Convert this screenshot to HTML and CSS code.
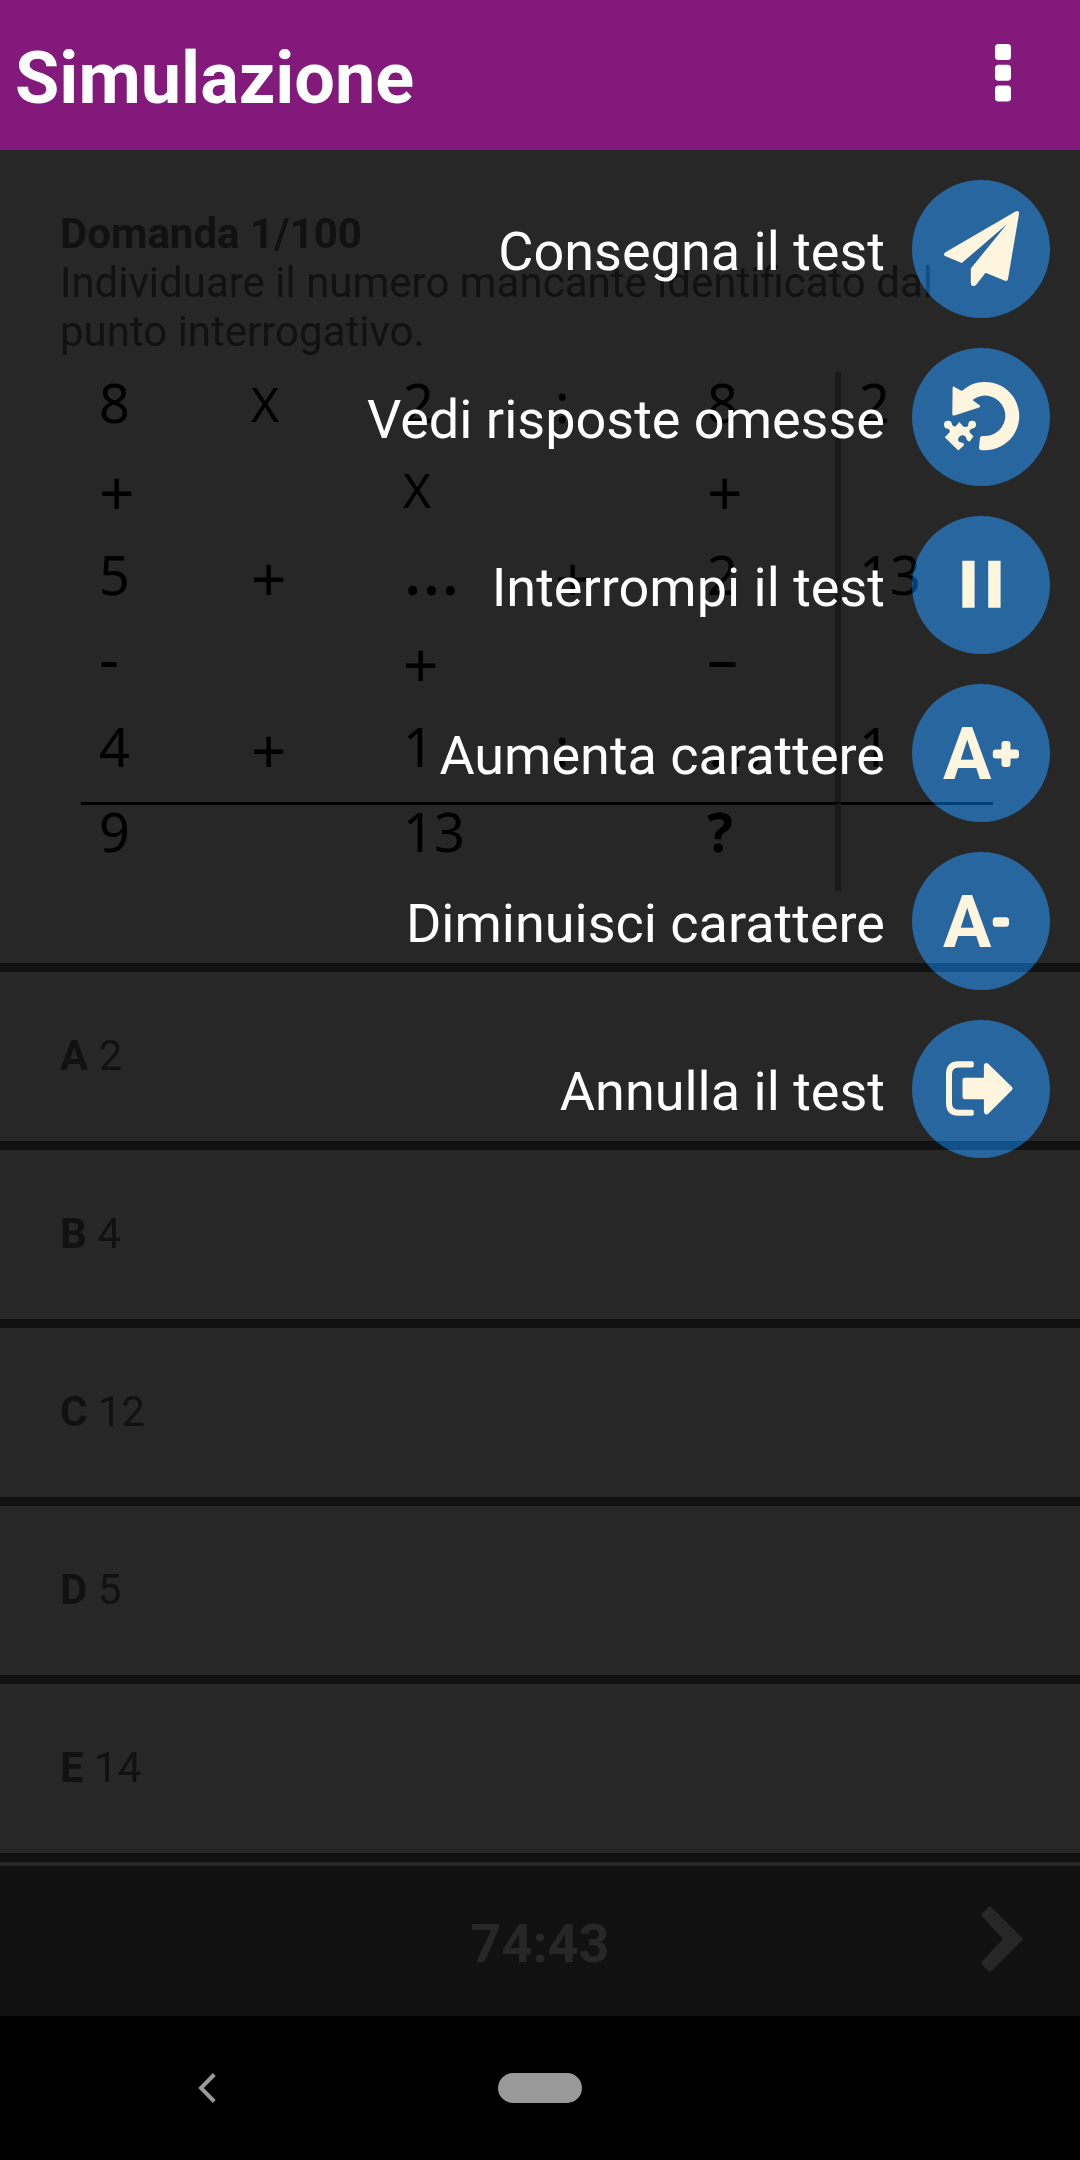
FILE: index.html
```html
<!DOCTYPE html>
<html lang="it">
<head>
<meta charset="utf-8">
<meta name="viewport" content="width=device-width, initial-scale=1">
<title>Simulazione</title>
<link rel="stylesheet" href="styles.css">
</head>
<body>
<header class="topbar">
  <h1 class="title">Simulazione</h1>
  <button class="more" type="button" aria-label="Menu">
    <svg width="16" height="58" viewBox="0 0 16 58" fill="currentColor"><rect width="16" height="16" rx="3.5"/><rect y="20.7" width="16" height="16" rx="3.5"/><rect y="41.4" width="16" height="16" rx="3.5"/></svg>
  </button>
</header>

<main class="quiz">
  <section class="question">
    <h2 class="counter">Domanda 1/100</h2>
    <p class="prompt">Individuare il numero mancante identificato dal punto interrogativo.</p>
    <table class="puzzle">
      <tbody>
        <tr><td>8</td><td class="times">X</td><td>2</td><td>:</td><td>8</td><td>2</td></tr>
        <tr><td class="plus">+</td><td></td><td class="times">X</td><td></td><td class="plus">+</td><td></td></tr>
        <tr><td>5</td><td class="plus">+</td><td class="dots">…</td><td class="plus">+</td><td>2</td><td>13</td></tr>
        <tr><td class="sign">-</td><td></td><td class="plus">+</td><td></td><td class="sign">–</td><td></td></tr>
        <tr><td>4</td><td class="plus">+</td><td>1</td><td>:</td><td class="dots">…</td><td>1</td></tr>
        <tr class="total"><td>9</td><td></td><td>13</td><td></td><td class="unknown">?</td><td></td></tr>
      </tbody>
    </table>
  </section>

  <div class="answers">
    <button class="answer" type="button"><b>A</b> 2</button>
    <button class="answer" type="button"><b>B</b> 4</button>
    <button class="answer" type="button"><b>C</b> 12</button>
    <button class="answer" type="button"><b>D</b> 5</button>
    <button class="answer" type="button"><b>E</b> 14</button>
  </div>

  <div class="menu">
    <button class="action" type="button">
      <span class="label">Consegna il test</span>
      <span class="disc"><svg class="icon" viewBox="0 0 138 138"><path d="M103.500 31.500Q107.500 29.500 107 34L96 99Q95.500 101.500 93 100.800L73.600 92.700L64 105Q62.500 106.500 60 105.700Q58.800 105 58.800 103V88.500L94.600 44.500L49.800 83L33 76Q31 74.500 33 72.500Z"/></svg></span>
    </button>
    <button class="action" type="button">
      <span class="label">Vedi risposte omesse</span>
      <span class="disc"><svg class="icon" viewBox="0 0 138 138"><path d="M49.800 43A34.200 34.200 0 1 1 73 102.300H70Q67 102.300 67 99.500L68 90Q68.200 88 70.500 88H73A20.200 20.200 0 1 0 60.500 52L67.500 57.300Q69 58.700 67 59.500L42.500 67.400Q40.300 68 40.300 66L40.600 40Q40.800 37.500 43 39.200Z"/><path d="M47.300 74L50.500 77.800Q53 80 55.800 78.300Q56.500 77 56.300 76A3.900 3.900 0 1 1 60.500 80.500Q58.500 80.800 57.600 82.500Q57 84.300 58.500 85.500L61.500 88.300L57.500 93.800Q55.500 92.700 54.600 91.500Q53.500 86.500 49 87.500Q45 89.500 46.600 93.500L51.800 95.500V97.500L46.300 102.500L32.700 89.300L37.500 84.500Q38.500 82 36 80.700A4 4 0 1 1 40 76.500Q41.500 79.500 44 78Z"/></svg></span>
    </button>
    <button class="action" type="button">
      <span class="label">Interrompi il test</span>
      <span class="disc"><svg class="icon" viewBox="0 0 138 138"><path d="M50.300 44.700H62.600V91.700H50.300ZM76.200 44.700H88.600V91.700H76.200Z"/></svg></span>
    </button>
    <button class="action" type="button">
      <span class="label">Aumenta carattere</span>
      <span class="disc"><svg class="icon" viewBox="0 0 138 138"><text x="31" y="95">A</text><rect x="80.800" y="65.500" width="26.200" height="9" rx="3"/><rect x="89.500" y="57" width="9" height="26" rx="3"/></svg></span>
    </button>
    <button class="action" type="button">
      <span class="label">Diminuisci carattere</span>
      <span class="disc"><svg class="icon" viewBox="0 0 138 138"><text x="31" y="95">A</text><rect x="80.800" y="65.300" width="16.200" height="9.400" rx="3"/></svg></span>
    </button>
    <button class="action" type="button">
      <span class="label">Annulla il test</span>
      <span class="disc"><svg class="icon" viewBox="0 0 138 138"><path d="M46.500 41.300H60Q61.800 41.300 61.800 43V45.500Q61.800 47.400 60 47.400H46.500Q40 47.400 40 54V83Q40 89.800 46.500 89.800H60Q61.800 89.800 61.800 91.500V94Q61.800 95.700 60 95.700H46.500Q34 95.700 34 83V54Q34 41.300 46.500 41.300ZM52.500 57.700H71.900V45.500Q71.900 43 74 43Q75.500 43 76.500 44L100 67Q101.300 68.500 100 70L76.500 93.500Q75 94.800 73.500 94.300Q71.900 93.800 71.900 91.500V79.300H52.500Q50.500 79 50.500 77V60Q50.500 57.700 52.500 57.700Z"/></svg></span>
    </button>
  </div>
</main>

<footer class="timerbar">
  <time class="timer">74:43</time>
  <button class="next" type="button" aria-label="Domanda successiva">
    <svg width="42" height="66" viewBox="0 0 42 66" fill="currentColor"><path d="M1 7.500L7.500 1Q9 -.3 10.500 1L41 31.500Q42.300 33 41 34.500L10.500 65Q9 66.300 7.500 65L1 58.500Q-.4 57 1 55.500L22 33L1 10.500Q-.4 9 1 7.500Z"/></svg>
  </button>
</footer>

<nav class="sysnav">
  <button class="back" type="button" aria-label="Indietro">
    <svg width="18" height="30" viewBox="0 0 18 30" fill="none" stroke="currentColor" stroke-width="4"><path d="M16.300 1.500L3 15L16.300 28.500"/></svg>
  </button>
  <button class="home" type="button" aria-label="Home"><span class="pill"></span></button>
</nav>
</body>
</html>
```
FILE: styles.css
```css
* {
  box-sizing: border-box;
}

body {
  margin: 0;
  min-height: 100vh;
  display: flex;
  flex-direction: column;
  background: #272727;
  color: #111111;
  font-family: Roboto, sans-serif;
  font-size: 42px;
  line-height: 49px;
}

button {
  border: 0;
  margin: 0;
  padding: 0;
  background: none;
  color: inherit;
  font: inherit;
  cursor: pointer;
}

svg {
  display: block;
}

h1,
h2,
p {
  margin: 0;
}

.topbar {
  display: flex;
  align-items: center;
  justify-content: space-between;
  height: 150px;
  padding: 0 69px 0 15px;
  background: #82197b;
  color: #ffffff;
}

.title {
  padding-top: 8px;
  font-size: 72px;
  line-height: 84px;
}

.more {
  padding-bottom: 5px;
}

.quiz {
  position: relative;
  flex: 1;
}

.question {
  padding: 59px 60px 72px;
}

.counter {
  font-size: 42px;
  line-height: 49px;
}

/* Number grid */
.puzzle {
  width: 95%;
  margin: 16px 0 0 21px;
  table-layout: fixed;
  border-spacing: 0;
  color: #000000;
  font-family: "Noto Sans", sans-serif;
  font-size: 54px;
  line-height: 40px;
}

.puzzle tr {
  height: 86px;
}

.puzzle td {
  padding: 10px 0 0 18px;
  vertical-align: top;
}

.puzzle td:nth-child(5) {
  border-right: 6px solid #191919;
}

.puzzle .total {
  height: 89px;
}

.puzzle .total td {
  padding-top: 6px;
  border-top: 3px solid #000000;
}

.puzzle .plus {
  font-size: 62px;
  line-height: 48px;
}

.puzzle .sign {
  font-size: 62px;
  line-height: 34px;
}

.puzzle .dots {
  font-size: 72px;
  line-height: 26px;
}

.puzzle .times {
  font-size: 48px;
  line-height: 44px;
}

.puzzle .unknown {
  font-weight: 700;
}

/* Answers */
.answers {
  border-top: 9px solid #111111;
}

.answer {
  display: block;
  width: 100%;
  height: 178px;
  padding: 0 60px 2px;
  border-bottom: 9px solid #111111;
  text-align: left;
}

/* Floating actions */
.menu {
  position: absolute;
  top: 30px;
  right: 30px;
  display: flex;
  flex-direction: column;
  align-items: flex-end;
  gap: 30px;
}

.action {
  display: flex;
  align-items: center;
  gap: 27px;
  color: #ffffff;
  font-size: 54px;
  line-height: 64px;
}

.label {
  position: relative;
  padding-top: 6px;
}

.disc {
  position: relative;
  width: 138px;
  height: 138px;
}

/* The disc brightens whatever lies under it */
.disc::before {
  content: "";
  position: absolute;
  inset: 0;
  border-radius: 50%;
  background: #013f78;
  mix-blend-mode: plus-lighter;
}

.icon {
  position: relative;
  width: 138px;
  height: 138px;
  fill: #fdf5dd;
}

.icon text {
  font-size: 72px;
  font-weight: 700;
}

/* Timer */
.timerbar {
  display: grid;
  grid-template-columns: 1fr auto 1fr;
  align-items: center;
  height: 150px;
  margin-top: 4px;
  padding: 0 57px;
  background: #111111;
  color: #272727;
}

.timer {
  grid-column: 2;
  padding-top: 6px;
  font-size: 54px;
  font-weight: 700;
  line-height: 64px;
}

.next {
  justify-self: end;
  padding-bottom: 4px;
}

.sysnav {
  display: grid;
  grid-template-columns: 1fr 252px 1fr;
  height: 144px;
  background: #000000;
  color: #999999;
}

.back,
.home {
  display: flex;
  align-items: center;
  justify-content: center;
}

.pill {
  width: 84px;
  height: 30px;
  border-radius: 15px;
  background: #999999;
}
```
